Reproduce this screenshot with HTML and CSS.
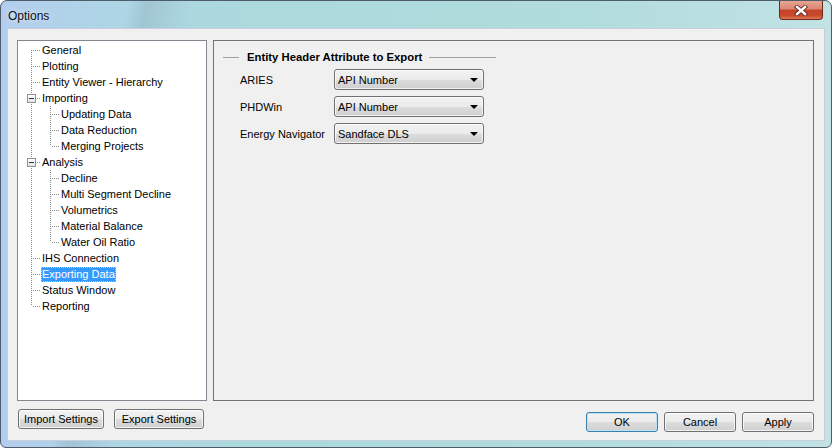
FILE: index.html
```html
<!DOCTYPE html>
<html>
<head>
    <link rel="stylesheet" href="styles.css">
</head>
<body>
    <div class="window">
        <div class="titlebar">
            <span class="title">Options</span>
            <span class="close-btn">
                <svg width="14" height="11" viewBox="0 0 14 11">
                    <path d="M3 2 L11 9 M11 2 L3 9" stroke="#5a2a22" stroke-width="4.2" stroke-linecap="square" fill="none"/>
                    <path d="M3 2 L11 9 M11 2 L3 9" stroke="#ffffff" stroke-width="2.4" stroke-linecap="square" fill="none"/>
                </svg>
            </span>
        </div>

        <div class="client">
            <div class="panels">
                <div class="tree">
                    <div class="row"><span class="g g-first"></span><span class="label">General</span></div>
                    <div class="row"><span class="g"></span><span class="label">Plotting</span></div>
                    <div class="row"><span class="g"></span><span class="label">Entity Viewer - Hierarchy</span></div>
                    <div class="row"><span class="g"><span class="box"></span></span><span class="label">Importing</span></div>
                    <div class="row"><span class="g g-pass"></span><span class="g"></span><span class="label">Updating Data</span></div>
                    <div class="row"><span class="g g-pass"></span><span class="g"></span><span class="label">Data Reduction</span></div>
                    <div class="row"><span class="g g-pass"></span><span class="g g-last"></span><span class="label">Merging Projects</span></div>
                    <div class="row"><span class="g"><span class="box"></span></span><span class="label">Analysis</span></div>
                    <div class="row"><span class="g g-pass"></span><span class="g"></span><span class="label">Decline</span></div>
                    <div class="row"><span class="g g-pass"></span><span class="g"></span><span class="label">Multi Segment Decline</span></div>
                    <div class="row"><span class="g g-pass"></span><span class="g"></span><span class="label">Volumetrics</span></div>
                    <div class="row"><span class="g g-pass"></span><span class="g"></span><span class="label">Material Balance</span></div>
                    <div class="row"><span class="g g-pass"></span><span class="g g-last"></span><span class="label">Water Oil Ratio</span></div>
                    <div class="row"><span class="g"></span><span class="label">IHS Connection</span></div>
                    <div class="row"><span class="g"></span><span class="label selected">Exporting Data</span></div>
                    <div class="row"><span class="g"></span><span class="label">Status Window</span></div>
                    <div class="row"><span class="g g-last"></span><span class="label">Reporting</span></div>
                </div>

                <div class="settings">
                    <div class="group-title">
                        <span class="rule rule-left"></span>
                        <span class="group-text">Entity Header Attribute to Export</span>
                        <span class="rule rule-right"></span>
                    </div>
                    <div class="field">
                        <label>ARIES</label>
                        <div class="combo"><span>API Number</span><span class="arrow"></span></div>
                    </div>
                    <div class="field">
                        <label>PHDWin</label>
                        <div class="combo"><span>API Number</span><span class="arrow"></span></div>
                    </div>
                    <div class="field">
                        <label>Energy Navigator</label>
                        <div class="combo"><span>Sandface DLS</span><span class="arrow"></span></div>
                    </div>
                </div>
            </div>

            <div class="buttons">
                <div class="left-buttons">
                    <button class="btn btn-import">Import Settings</button>
                    <button class="btn btn-export">Export Settings</button>
                </div>
                <div class="right-buttons">
                    <button class="btn btn-dialog btn-default">OK</button>
                    <button class="btn btn-dialog">Cancel</button>
                    <button class="btn btn-dialog">Apply</button>
                </div>
            </div>
        </div>
    </div>
</body>
</html>
```

FILE: styles.css
```css
body {
    margin: 0;
    background: #fff;
    font-family: "Liberation Sans", Arial, sans-serif;
    font-size: 11px;
    color: #000;
}
.window {
    width: 830px;
    height: 446px;
    border: 1px solid #4f5d6b;
    border-radius: 7px 7px 6px 6px;
    display: flex;
    flex-direction: column;
    overflow: hidden;
    background:
        linear-gradient(100deg, rgba(255,255,255,0) 0 14%, rgba(120,150,160,0.25) 16%, rgba(255,255,255,0) 21%),
        linear-gradient(to right, #b3cdee 0%, #aed5e6 12%, #abd9dc 30%, #b1dcdd 70%, #c2e2e4 100%);
}
.titlebar {
    height: 27px;
    display: flex;
    justify-content: space-between;
    align-items: flex-start;
    padding: 0 8px 0 7px;
}
.title {
    font-size: 12px;
    line-height: 12px;
    margin-top: 9px;
    color: #101010;
    text-shadow: 0 0 6px rgba(255,255,255,0.9);
}
.close-btn {
    width: 42px;
    height: 18px;
    border: 1px solid #6b2a1e;
    border-top: none;
    border-radius: 0 0 4px 4px;
    display: flex;
    align-items: center;
    justify-content: center;
    background: linear-gradient(to bottom, #e8a594 0%, #d98672 45%, #c2432a 50%, #c9492c 80%, #dd7a55 100%);
}
.client {
    flex: 1;
    margin: 0 6px 6px 6px;
    border: 1px solid #c7d0da;
    background: #f0f0f0;
    padding: 11px 10px 0 9px;
    display: flex;
    flex-direction: column;
}
.panels {
    display: flex;
    gap: 6px;
    height: 361px;
}
.tree {
    width: 184px;
    flex: none;
    border: 1px solid #828790;
    background: #fff;
    padding: 1px 0 0 4px;
}
.row {
    height: 16px;
    display: flex;
    align-items: center;
}
.g {
    width: 19px;
    height: 16px;
    position: relative;
    flex: none;
}
.g::before {
    content: '';
    position: absolute;
    left: 9px;
    top: 0;
    bottom: 0;
    width: 1px;
    background: repeating-linear-gradient(to bottom, #8c8c8c 0 1px, transparent 1px 2px);
}
.g::after {
    content: '';
    position: absolute;
    left: 11px;
    top: 8px;
    width: 8px;
    height: 1px;
    background: repeating-linear-gradient(to right, #8c8c8c 0 1px, transparent 1px 2px);
}
.g-first::before {
    top: 8px;
}
.g-last::before {
    bottom: 8px;
}
.g-pass::after {
    display: none;
}
.box {
    position: absolute;
    left: 5px;
    top: 4px;
    width: 7px;
    height: 7px;
    border: 1px solid #919191;
    background: linear-gradient(to bottom, #fff, #e4e4e4);
    z-index: 1;
}
.box::after {
    content: '';
    position: absolute;
    left: 1px;
    top: 3px;
    width: 5px;
    height: 1px;
    background: #1e395b;
}
.label {
    padding: 0 1px;
    line-height: 15px;
    height: 15px;
    white-space: nowrap;
}
.selected {
    background: #3399ff;
    color: #fff;
    outline: 1px dotted #e9c88c;
    outline-offset: -1px;
}
.settings {
    flex: 1;
    border: 1px solid #727272;
    padding: 9px 0 0 9px;
}
.group-title {
    display: flex;
    align-items: center;
    height: 14px;
    margin-bottom: 5px;
}
.rule {
    height: 1px;
    background: #a0a0a0;
}
.rule-left {
    width: 16px;
}
.rule-right {
    width: 67px;
}
.group-text {
    font-weight: bold;
    font-size: 11.3px;
    padding: 0 7px 0 8px;
}
.field {
    display: flex;
    align-items: center;
    height: 21px;
    margin-bottom: 6px;
    padding-left: 17px;
}
.field label {
    width: 94px;
}
.combo {
    width: 145px;
    height: 19px;
    border: 1px solid #707070;
    border-radius: 3px;
    padding: 0 0 0 3px;
    display: flex;
    align-items: center;
    justify-content: space-between;
    background: linear-gradient(to bottom, #f2f2f2 0%, #ebebeb 50%, #dddddd 51%, #cfcfcf 100%);
    box-shadow: inset 0 0 0 1px rgba(255,255,255,0.7);
}
.arrow {
    width: 0;
    height: 0;
    border-left: 4px solid transparent;
    border-right: 4px solid transparent;
    border-top: 4px solid #000;
    margin-right: 5px;
}
.buttons {
    display: flex;
    justify-content: space-between;
    margin-top: 8px;
}
.left-buttons {
    display: flex;
    gap: 10px;
    padding-left: 1px;
}
.right-buttons {
    display: flex;
    gap: 6px;
    margin-top: 3px;
}
.btn {
    font-family: "Liberation Sans", Arial, sans-serif;
    font-size: 11px;
    color: #000;
    height: 20px;
    padding: 0;
    border: 1px solid #707070;
    border-radius: 3px;
    background: linear-gradient(to bottom, #f2f2f2 0%, #ebebeb 50%, #dddddd 51%, #cfcfcf 100%);
    box-shadow: inset 0 0 0 1px rgba(255,255,255,0.75);
}
.btn-import {
    width: 86px;
}
.btn-export {
    width: 90px;
}
.btn-dialog {
    width: 72px;
    height: 20px;
}
.btn-default {
    border-color: #3c7fb1;
    box-shadow: inset 0 0 0 1px #b9e4f7;
}
```
